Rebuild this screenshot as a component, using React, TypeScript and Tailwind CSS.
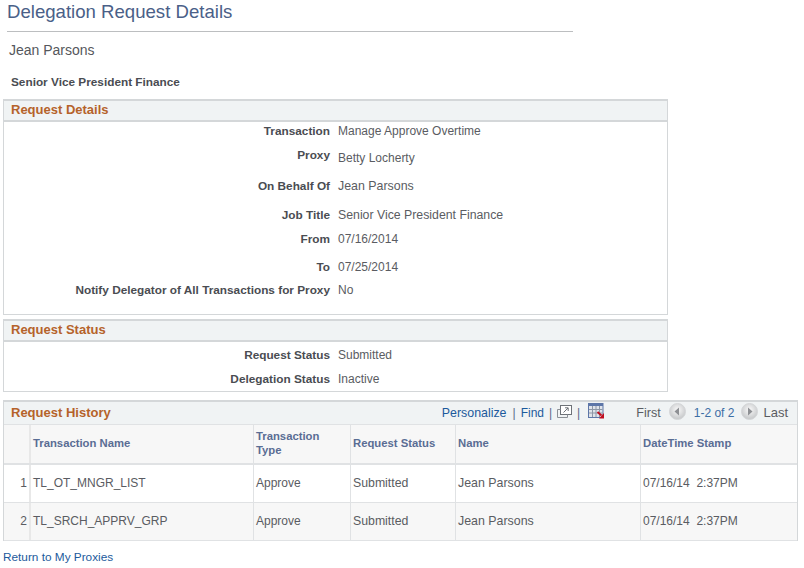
import React from "react";

const details: [string, string, string, string, string][] = [
  ["Transaction", "Manage Approve Overtime", "h-[24px]", "pt-[1px]", "text-[12px]"],
  ["Proxy", "Betty Locherty", "h-[31px]", "pt-[4px]", "text-[12px]"],
  ["On Behalf Of", "Jean Parsons", "h-[29px]", "pt-[1px]", "text-[12.4px]"],
  ["Job Title", "Senior Vice President Finance", "h-[24px]", "pt-[1px]", "text-[12.3px]"],
  ["From", "07/16/2014", "h-[28px]", "pt-[1px]", "text-[12px]"],
  ["To", "07/25/2014", "h-[23px]", "pt-[1px]", "text-[12px]"],
  ["Notify Delegator of All Transactions for Proxy", "No", "h-[24px]", "pt-[1px]", "text-[12px]"],
];

const cols = "grid grid-cols-[27px_223px_97px_105px_185px_1fr]";

const rows = [
  ["1", "TL_OT_MNGR_LIST", "bg-white"],
  ["2", "TL_SRCH_APPRV_GRP", "bg-[#f7f7f7]"],
];

function Arrow({ right }: { right?: boolean }) {
  return (
    <svg width="17" height="17" viewBox="0 0 17 17" className="block shrink-0">
      <defs>
        <radialGradient id={right ? "ar" : "al"} cx="50%" cy="40%" r="60%">
          <stop offset="0%" stopColor="#fafafa" />
          <stop offset="100%" stopColor="#c4c6c8" />
        </radialGradient>
      </defs>
      <circle cx="8.5" cy="8.5" r="8" fill={`url(#${right ? "ar" : "al"})`} stroke="#d4d6d8" />
      <path d={right ? "M7 4.5 L11.5 8.5 L7 12.5 Z" : "M10 4.5 L5.5 8.5 L10 12.5 Z"} fill="#8e9094" />
    </svg>
  );
}

function Header({ children }: { children: React.ReactNode }) {
  return (
    <div className="h-[21px] bg-[#f0f3f4] border-b-2 border-[#d4d7d9] text-[13px] font-bold text-[#b5622a] pl-[7px] leading-[17px]">
      {children}
    </div>
  );
}

function Row({ label, value, h, pt, size }: { label: string; value: string; h: string; pt: string; size: string }) {
  return (
    <div className={`flex leading-[16px] ${h}`}>
      <div className="w-[326px] shrink-0 text-right text-[11.8px] font-bold text-[#4a4c52] pt-[1px]">{label}</div>
      <div className={`ml-[8px] text-[#5a5c62] ${size} ${pt}`}>{value}</div>
    </div>
  );
}

export default function App() {
  return (
    <div className="w-[804px] h-[568px] bg-white overflow-hidden font-['Liberation_Sans',Arial,sans-serif]">
      <div className="ml-[7px] w-[566px] h-[32px] border-b border-[#bcbec0] text-[18.6px] leading-[24px] text-[#4a6088]">
        Delegation Request Details
      </div>
      <div className="ml-[9px] mt-[9px] text-[14px] leading-[18px] text-[#55575c]">Jean Parsons</div>
      <div className="ml-[11px] mt-[15px] text-[11.8px] leading-[16px] font-bold text-[#4a4c52]">
        Senior Vice President Finance
      </div>
      <div className="ml-[3px] mt-[9px] w-[665px] h-[216px] border-t-2 border-r border-b border-l border-[#d4d7d9]">
        <Header>Request Details</Header>
        <div>
          {details.map(([l, v, h, pt, s]) => (
            <Row key={l} label={l} value={v} h={h} pt={pt} size={s} />
          ))}
        </div>
      </div>
      <div className="ml-[3px] mt-[4px] w-[665px] h-[73px] border-t-2 border-r border-b border-l border-[#d4d7d9]">
        <Header>Request Status</Header>
        <div className="pt-[4px]">
          <Row label="Request Status" value="Submitted" h="h-[24px]" pt="pt-[1px]" size="text-[12px]" />
          <Row label="Delegation Status" value="Inactive" h="h-[24px]" pt="pt-[1px]" size="text-[12px]" />
        </div>
      </div>
      <div className="ml-[3px] mt-[8px] w-[795px] border-t-2 border-l border-r border-[#d4d7d9]">
        <div className="h-[22px] bg-[#f0f3f4] flex items-center pl-[7px] pr-[9px] text-[12px]">
          <span className="text-[13px] font-bold text-[#b5622a] mr-auto">Request History</span>
          <span className="text-[12.4px] text-[#1c5a9c]">Personalize</span>
          <span className="text-[#5a6a8a] ml-[6px] mr-[5px]">|</span>
          <span className="text-[#1c5a9c]">Find</span>
          <span className="text-[#5a6a8a] mx-[5px]">|</span>
          <svg width="15" height="14" viewBox="0 0 15 14" className="mb-[3px]">
            <rect x="3.5" y="0.5" width="11" height="9" fill="#fff" stroke="#6d7278" />
            <path d="M0.5 4.5H3.5M0.5 4.5V12.5H10.5V9.5" fill="none" stroke="#8b9096" />
            <path d="M6.5 7.5L11 3M8 2.8H11.2V6" fill="none" stroke="#6d7278" />
          </svg>
          <span className="text-[#5a6a8a] mx-[5px]">|</span>
          <svg width="17" height="16" viewBox="0 0 17 16" className="mb-[4px] ml-[3px]">
            <rect x="0" y="0" width="15.5" height="15" fill="#5d76a8" />
            <path d="M1 3h13.5v11H1z" fill="#dfe3ea" />
            <path d="M1 6.5h13.5M1 10h13.5M4.5 3v11M8 3v11M11.5 3v11" stroke="#8d97a6" strokeWidth="1" />
            <path d="M9.5 9L13.5 12.5" stroke="#c00d1e" strokeWidth="2" />
            <path d="M16 10V15.5H11Z" fill="#c00d1e" />
          </svg>
          <span className="text-[12.6px] text-[#5a5c62] ml-[31px]">First</span>
          <span className="ml-[8px] mb-[3px]"><Arrow /></span>
          <span className="text-[#3c6ea5] ml-[8px]">1-2 of 2</span>
          <span className="ml-[7px] mb-[3px]"><Arrow right /></span>
          <span className="text-[13px] text-[#5a5c62] ml-[5px]">Last</span>
        </div>
        <div className={`${cols} h-[41px] bg-[#f7f7f7] border-t border-b-2 border-[#e0e2e4] text-[11.3px] leading-[14px] font-bold text-[#5a6d94]`}>
          <div className="border-r-2 border-[#e8e8e8]" />
          <div className="border-r border-[#e0e2e4] pl-[2px] pb-[2px] flex items-center">Transaction Name</div>
          <div className="border-r border-[#e0e2e4] pl-[2px] pb-[2px] flex items-center">Transaction<br />Type</div>
          <div className="border-r border-[#e0e2e4] pl-[2px] pb-[2px] flex items-center">Request Status</div>
          <div className="border-r border-[#e0e2e4] pl-[2px] pb-[2px] flex items-center">Name</div>
          <div className="pl-[2px] pb-[2px] flex items-center">DateTime Stamp</div>
        </div>
        {rows.map(([n, t, bg]) => (
          <div key={n} className={`${cols} h-[38px] ${bg} border-b border-[#e0e2e4] text-[12px] text-[#5a5c62]`}>
            <div className="border-r-2 border-[#e8e8e8] text-right pr-[2px] pb-[2px] flex items-center justify-end">{n}</div>
            <div className="border-r border-[#e0e2e4] pl-[2px] pb-[2px] flex items-center">{t}</div>
            <div className="border-r border-[#e0e2e4] pl-[2px] pb-[2px] flex items-center">Approve</div>
            <div className="border-r border-[#e0e2e4] pl-[2px] flex items-center text-[12.3px]">Submitted</div>
            <div className="border-r border-[#e0e2e4] pl-[2px] flex items-center text-[12.4px]">Jean Parsons</div>
            <div className="pl-[2px] pb-[2px] flex items-center whitespace-pre">07/16/14  2:37PM</div>
          </div>
        ))}
      </div>
      <div className="ml-[3px] mt-[8px] text-[11.8px] leading-[16px] text-[#1c5a9c]">Return to My Proxies</div>
    </div>
  );
}
